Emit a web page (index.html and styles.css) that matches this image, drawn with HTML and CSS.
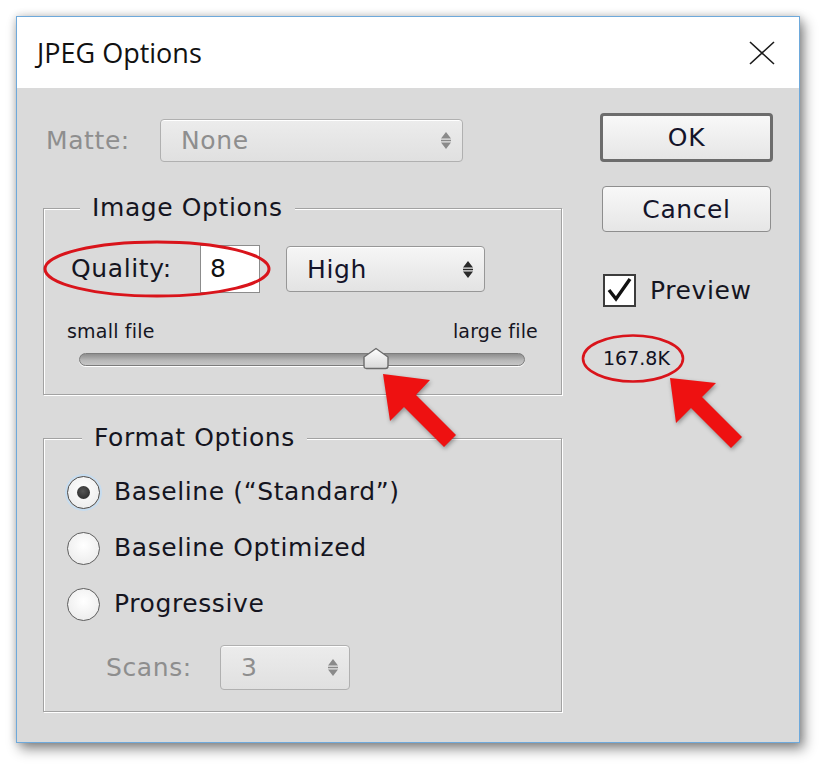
FILE: index.html
```html
<!DOCTYPE html>
<html>
<head>
<meta charset="utf-8">
<link rel="stylesheet" href="styles.css">
</head>
<body>
<div class="dialog">
  <div class="titlebar">
    <span class="title">JPEG Options</span>
    <svg class="close" width="26" height="24" viewBox="0 0 26 24"><path d="M1 1 L25 23 M25 1 L1 23" stroke="#1a1a1a" stroke-width="1.6" fill="none"/></svg>
  </div>
  <div class="content">
    <div class="left">
      <div class="matte-row">
        <span class="lbl disabled matte-lbl">Matte:</span>
        <div class="select disabled matte-select">
          <span>None</span>
          <svg class="spin" width="12" height="21" viewBox="0 0 12 21"><path d="M6 2 L11 8.5 H1 Z M1 12.5 H11 L6 19 Z M1 9.7 H11 V11.3 H1 Z"/></svg>
        </div>
      </div>

      <fieldset class="group image-group">
        <legend>Image Options</legend>
        <div class="quality-row">
          <span class="lbl quality-lbl">Quality:</span>
          <div class="qinput">8</div>
          <div class="select high-select">
            <span>High</span>
            <svg class="spin" width="12" height="21" viewBox="0 0 12 21"><path d="M6 2 L11 8.5 H1 Z M1 12.5 H11 L6 19 Z M1 9.7 H11 V11.3 H1 Z"/></svg>
          </div>
        </div>
        <div class="slider-labels"><span>small file</span><span>large file</span></div>
        <div class="track">
          <svg class="thumb" style="left: 66.6%" width="27" height="23" viewBox="0 0 27 23">
            <defs><linearGradient id="tg" x1="0" y1="0" x2="0" y2="1"><stop offset="0" stop-color="#ffffff"/><stop offset="1" stop-color="#d8d8d8"/></linearGradient></defs>
            <path d="M1.5 19 V10 L13.5 1.5 L25.5 10 V19 Q25.5 21.5 23 21.5 H4 Q1.5 21.5 1.5 19 Z" fill="url(#tg)" stroke="#6b6b6b" stroke-width="1.4"/>
          </svg>
        </div>
      </fieldset>

      <fieldset class="group format-group">
        <legend>Format Options</legend>
        <div class="radio-row"><span class="radio checked"></span><span class="lbl">Baseline (“Standard”)</span></div>
        <div class="radio-row"><span class="radio"></span><span class="lbl">Baseline Optimized</span></div>
        <div class="radio-row"><span class="radio"></span><span class="lbl">Progressive</span></div>
        <div class="scans-row">
          <span class="lbl disabled scans-lbl">Scans:</span>
          <div class="select disabled scans-select">
            <span>3</span>
            <svg class="spin" width="12" height="21" viewBox="0 0 12 21"><path d="M6 2 L11 8.5 H1 Z M1 12.5 H11 L6 19 Z M1 9.7 H11 V11.3 H1 Z"/></svg>
          </div>
        </div>
      </fieldset>
    </div>

    <div class="right">
      <div class="btn ok">OK</div>
      <div class="btn cancel">Cancel</div>
      <div class="preview-row">
        <span class="checkbox"><svg width="29" height="29" viewBox="0 0 29 29"><path d="M4 14 L11 23 L25 3" stroke="#111" stroke-width="3.4" fill="none"/></svg></span>
        <span class="lbl">Preview</span>
      </div>
      <div class="size">167.8K</div>
    </div>
  </div>
</div>

<svg class="annot" width="825" height="768" viewBox="0 0 825 768">
  <ellipse cx="157" cy="269" rx="112" ry="27" fill="none" stroke="#d9141b" stroke-width="3"/>
  <ellipse cx="633" cy="358.5" rx="50" ry="23" fill="none" stroke="#d9141b" stroke-width="2.6"/>
  <polygon class="arrow" points="383,374 430,380 416,395 456,435 444,447 404,407 390,421" fill="#ee1111"/>
  <polygon class="arrow" points="670,378 716,383 702,397 742,437 731,448 691,408 676,423" fill="#ee1111"/>
</svg>
</body>
</html>
```

FILE: styles.css
```css
html, body {
  margin: 0;
  padding: 0;
  background: #ffffff;
}

body {
  font-family: "DejaVu Sans", sans-serif;
  font-size: 25px;
  letter-spacing: 0.6px;
  color: #15151f;
  width: 825px;
  height: 768px;
  position: relative;
  overflow: hidden;
}

.dialog {
  margin: 16px 0 0 16px;
  width: 784px;
  height: 727px;
  box-sizing: border-box;
  border: 1px solid #6ea9db;
  background: #dadada;
  box-shadow: 4px 6px 12px rgba(0, 0, 0, 0.45), 0 0 8px rgba(0, 0, 0, 0.18);
  display: flex;
  flex-direction: column;
}

.titlebar {
  height: 71px;
  flex-shrink: 0;
  background: #ffffff;
  display: flex;
  align-items: center;
  justify-content: space-between;
  padding: 0 24px 0 20px;
}

.title {
  font-family: "Open Sans", sans-serif;
  font-size: 27px;
  letter-spacing: 0;
  color: #111111;
}

.content {
  display: grid;
  grid-template-columns: 519px 173px;
  column-gap: 38px;
  padding: 0 26px;
  align-items: start;
}

.left {
  margin-top: 31px;
}

.lbl {
  white-space: nowrap;
  line-height: 28px;
}

.disabled {
  color: #8e8e8e;
}

/* Matte */
.matte-row {
  display: flex;
  align-items: center;
  height: 43px;
}

.matte-lbl {
  width: 117px;
  padding-left: 3px;
  box-sizing: border-box;
}

.select {
  box-sizing: border-box;
  display: flex;
  align-items: center;
  justify-content: space-between;
  border: 1px solid #979797;
  border-radius: 4px;
  background: linear-gradient(#f6f6f6, #e3e3e3);
  box-shadow: inset 0 1px 0 #ffffff;
  padding: 0 10px 0 20px;
}

.select .spin {
  fill: #2a2a2a;
}

.select.disabled {
  border-color: #b0b0b0;
  background: linear-gradient(#ececec, #e0e0e0);
}

.select.disabled .spin {
  fill: #8a8a8a;
}

.matte-select {
  width: 303px;
  height: 43px;
}

/* Groups */
.group {
  margin: 0;
  padding: 0;
  min-width: 0;
  border: 1px solid #a2a2a2;
  box-shadow: inset 1px 1px 0 #ffffff, 1px 1px 0 #ffffff;
}

.group legend {
  margin-left: 36px;
  padding: 0 12px;
  line-height: 28px;
  background: #dadada;
}

.image-group {
  margin-top: 32px;
  padding-bottom: 28px;
}

.quality-row {
  display: flex;
  align-items: center;
  height: 48px;
  margin-top: 23px;
  padding-left: 27px;
}

.quality-lbl {
  width: 129px;
}

.qinput {
  box-sizing: border-box;
  width: 60px;
  height: 48px;
  background: #ffffff;
  border: 1px solid #8c8c8c;
  padding-left: 9px;
  line-height: 46px;
  color: #111111;
}

.high-select {
  margin-left: 26px;
  width: 199px;
  height: 46px;
  padding-left: 20px;
  color: #14142a;
}

.slider-labels {
  display: flex;
  justify-content: space-between;
  margin-top: 27px;
  padding: 0 23px;
  font-size: 19px;
  letter-spacing: 0.2px;
  line-height: 22px;
}

.track {
  position: relative;
  box-sizing: border-box;
  margin: 11px 36px 0 35px;
  height: 13px;
  border: 1px solid #7c7c7c;
  border-radius: 7px;
  background: linear-gradient(#8d8d8d, #b9b9b9 60%, #c6c6c6);
  box-shadow: 0 1px 0 #ffffff;
}

.thumb {
  position: absolute;
  top: -7px;
  transform: translateX(-50%);
}

.format-group {
  margin-top: 29px;
  padding-top: 12px;
  padding-bottom: 21px;
}

.format-group legend {
  margin-left: 38px;
}

.radio-row {
  display: flex;
  align-items: center;
  height: 56px;
  padding-left: 23px;
  gap: 14px;
}

.radio {
  box-sizing: border-box;
  width: 33px;
  height: 33px;
  border-radius: 50%;
  border: 1.5px solid #5e5e5e;
  background: radial-gradient(circle at 50% 40%, #ffffff, #e8e8e8);
  display: flex;
  align-items: center;
  justify-content: center;
  flex-shrink: 0;
}

.radio.checked {
  border-color: #4b4b4b;
  box-shadow: 0 0 0 2px #c6dcef;
}

.radio.checked::after {
  content: "";
  width: 13px;
  height: 13px;
  border-radius: 50%;
  background: radial-gradient(circle at 45% 40%, #555, #222);
}

.scans-row {
  display: flex;
  align-items: center;
  height: 45px;
  margin-top: 13px;
  padding-left: 62px;
}

.scans-lbl {
  width: 114px;
}

.scans-select {
  width: 130px;
  height: 45px;
}

/* Right column */
.right {
  margin-top: 25px;
  display: flex;
  flex-direction: column;
  align-items: flex-start;
}

.btn {
  box-sizing: border-box;
  display: flex;
  align-items: center;
  justify-content: center;
  border-radius: 4px;
  background: linear-gradient(#f8f8f8, #e6e6e6);
  color: #14142a;
}

.ok {
  width: 173px;
  height: 49px;
  border: 3px solid #6c6c6c;
}

.cancel {
  width: 169px;
  height: 46px;
  margin: 24px 0 0 2px;
  border: 1.5px solid #8e8e8e;
}

.preview-row {
  display: flex;
  align-items: center;
  margin: 42px 0 0 3px;
  gap: 14px;
  height: 33px;
}

.checkbox {
  box-sizing: border-box;
  width: 33px;
  height: 33px;
  border: 2px solid #3c3c3c;
  background: #ffffff;
  display: flex;
  align-items: center;
  justify-content: center;
}

.size {
  margin: 40px 0 0 3px;
  font-size: 19px;
  letter-spacing: 0;
  line-height: 22px;
  color: #111122;
}

/* Annotations overlay */
.annot {
  position: absolute;
  top: 0;
  left: 0;
  pointer-events: none;
}

.annot .arrow {
  filter: drop-shadow(1px 2px 2px rgba(0, 0, 0, 0.35));
}
```
